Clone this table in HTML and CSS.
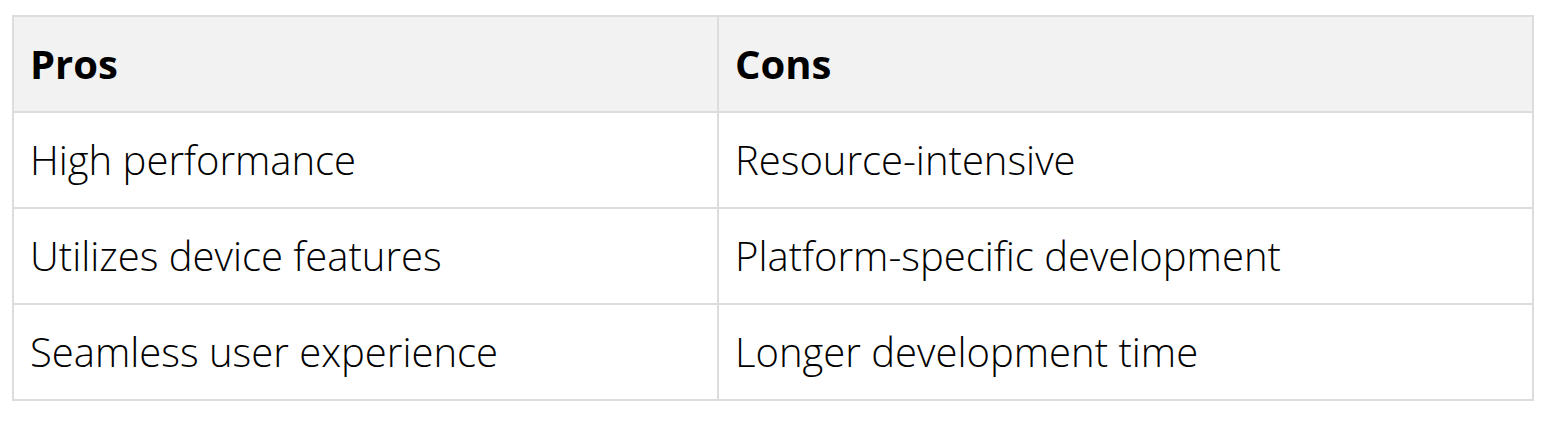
FILE: index.html
```html
<!DOCTYPE html>
<html>
<head>
<meta charset="utf-8">
<link rel="stylesheet" href="styles.css">
</head>
<body>
<table class="pc">
  <colgroup><col class="c1"><col class="c2"></colgroup>
  <thead>
    <tr><th>Pros</th><th>Cons</th></tr>
  </thead>
  <tbody>
    <tr><td>High performance</td><td>Resource-intensive</td></tr>
    <tr><td>Utilizes device features</td><td>Platform-specific development</td></tr>
    <tr><td>Seamless user experience</td><td>Longer development time</td></tr>
  </tbody>
</table>
</body>
</html>
```
FILE: styles.css
```css
html, body { margin: 0; padding: 0; background: #fff; }
body { padding: 15px 16px 0 12px; font-family: "Open Sans", sans-serif; color: #000; }
.pc { border-collapse: collapse; width: 1522px; table-layout: fixed; }
.c1 { width: 705px; }
.pc th, .pc td { border: 2px solid #dddddd; text-align: left; padding: 0 16px; height: 96px; box-sizing: border-box; font-size: 40px; line-height: 1.5; vertical-align: middle; }
.pc th { background: #f2f2f2; font-weight: 700; }
.pc td { font-weight: 300; }
```
